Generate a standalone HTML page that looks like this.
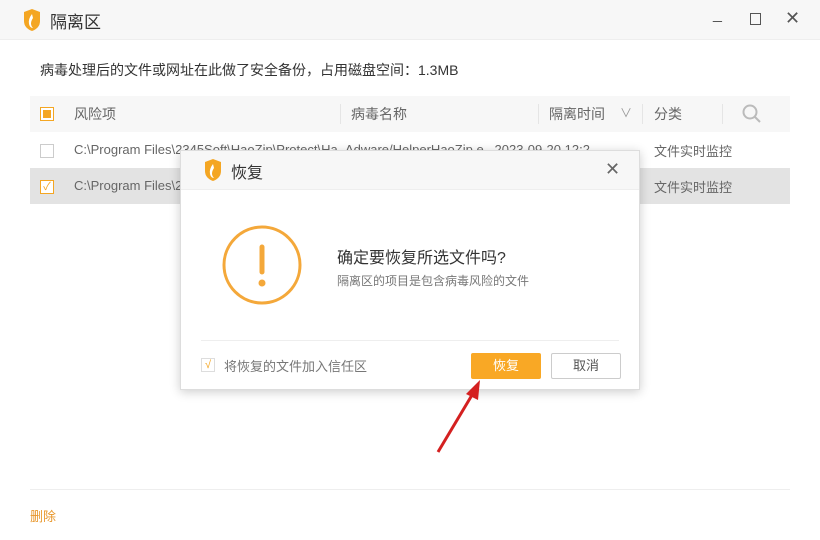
<!DOCTYPE html><html><head><meta charset="utf-8"><style>
*{margin:0;padding:0;box-sizing:border-box}
body{width:820px;height:540px;background:#fff;font-family:"Liberation Sans","Noto Sans CJK SC",sans-serif;position:relative;overflow:hidden;color:#333}
.a{position:absolute;white-space:nowrap}
.t{font-size:13px;color:#666}
.cb{position:absolute;width:14px;height:14px;border:1px solid #ccc;background:#fff}
</style></head><body>
<div class="a" style="left:0;top:0;width:820px;height:40px;background:#f7f7f7;border-bottom:1px solid #eee"></div>
<svg class="a" style="left:22px;top:9px" width="20" height="22" viewBox="0 0 20 22"><path d="M2 3 L10 0 L18 3 L18 12 Q18 19 10 22 Q2 19 2 12Z" fill="#f4a623"/><path d="M10 5 Q6 10 7 15 Q8 19 11 19 Q7 15 11 9 Z" fill="#fff"/></svg>
<div class="a" style="left:50px;top:8px;font-size:17px;color:#333">隔离区</div>
<div class="a" style="left:713px;top:6px;font-size:16px;color:#555">_</div>
<div class="a" style="left:750px;top:13px;width:11px;height:12px;border:1.5px solid #555"></div>
<div class="a" style="left:785px;top:8px;font-size:18px;color:#555">✕</div>
<div class="a" style="left:40px;top:60px;font-size:14px;color:#333">病毒处理后的文件或网址在此做了安全备份，占用磁盘空间：1.3MB</div>
<div class="a" style="left:30px;top:96px;width:760px;height:36px;background:#f7f7f7"></div>
<div class="cb" style="left:40px;top:107px;border-color:#f4a623"><div style="margin:2px;width:8px;height:8px;background:#f4a623"></div></div>
<div class="a t" style="left:74px;top:104px;font-size:14px">风险项</div>
<div class="a" style="left:340px;top:104px;width:1px;height:20px;background:#e5e5e5"></div>
<div class="a t" style="left:351px;top:104px;font-size:14px">病毒名称</div>
<div class="a" style="left:538px;top:104px;width:1px;height:20px;background:#e5e5e5"></div>
<div class="a t" style="left:549px;top:104px;font-size:14px">隔离时间</div>
<div class="a t" style="left:620px;top:104px;font-size:12px;color:#999">∨</div>
<div class="a" style="left:642px;top:104px;width:1px;height:20px;background:#e5e5e5"></div>
<div class="a t" style="left:654px;top:104px;font-size:14px">分类</div>
<div class="a" style="left:722px;top:104px;width:1px;height:20px;background:#e5e5e5"></div>
<svg class="a" style="left:742px;top:104px" width="20" height="20"><circle cx="8" cy="8" r="6.5" fill="none" stroke="#bbb" stroke-width="2"/><line x1="13" y1="13" x2="18" y2="18" stroke="#bbb" stroke-width="2"/></svg>
<div class="cb" style="left:40px;top:144px"></div>
<div class="a t" style="left:74px;top:142px">C:\Program Files\2345Soft\HaoZip\Protect\Ha&nbsp;&nbsp;Adware/HelperHaoZip.e&nbsp;&nbsp;&nbsp;2023-09-20 12:2</div>
<div class="a t" style="left:654px;top:141px">文件实时监控</div>
<div class="a" style="left:30px;top:168px;width:760px;height:36px;background:#e3e3e3"></div>
<div class="cb" style="left:40px;top:180px;border-color:#f4a623;color:#f4a623;font-size:11px;line-height:12px;text-align:center">✓</div>
<div class="a t" style="left:74px;top:178px">C:\Program Files\2</div>
<div class="a t" style="left:630px;top:178px">2</div>
<div class="a t" style="left:654px;top:177px">文件实时监控</div>
<div class="a" style="left:30px;top:489px;width:760px;height:1px;background:#eee"></div>
<div class="a" style="left:30px;top:506px;font-size:13px;color:#e8962a">删除</div>
<div class="a" style="left:180px;top:150px;width:460px;height:240px;background:#fff;border:1px solid #ddd;box-shadow:0 2px 10px rgba(0,0,0,.2)">
<div class="a" style="left:0;top:0;width:458px;height:39px;background:#f7f7f7;border-bottom:1px solid #eee"></div>
<svg class="a" style="left:22px;top:8px" width="20" height="22" viewBox="0 0 20 22"><path d="M2 3 L10 0 L18 3 L18 12 Q18 19 10 22 Q2 19 2 12Z" fill="#f4a623"/><path d="M10 5 Q6 10 7 15 Q8 19 11 19 Q7 15 11 9 Z" fill="#fff"/></svg>
<div class="a" style="left:50px;top:8px;font-size:16px;color:#333">恢复</div>
<div class="a" style="left:424px;top:8px;font-size:18px;color:#666">✕</div>
<svg class="a" style="left:41px;top:74px" width="80" height="80"><circle cx="40" cy="40" r="38" fill="none" stroke="#f4a83a" stroke-width="3"/><line x1="40" y1="22" x2="40" y2="47" stroke="#f4a83a" stroke-width="5" stroke-linecap="round"/><circle cx="40" cy="58" r="3.5" fill="#f4a83a"/></svg>
<div class="a" style="left:156px;top:93px;font-size:16px;color:#333">确定要恢复所选文件吗?</div>
<div class="a" style="left:156px;top:121px;font-size:12px;color:#777">隔离区的项目是包含病毒风险的文件</div>
<div class="a" style="left:20px;top:189px;width:418px;height:1px;background:#eee"></div>
<div class="a" style="left:20px;top:207px;width:14px;height:14px;border:1px solid #ddd;color:#f4a623;font-size:11px;line-height:12px;text-align:center">√</div>
<div class="a" style="left:43px;top:205px;font-size:13px;color:#777">将恢复的文件加入信任区</div>
<div class="a" style="left:290px;top:202px;width:70px;height:26px;background:#f9a825;color:#fff;font-size:13px;text-align:center;line-height:26px;border-radius:2px">恢复</div>
<div class="a" style="left:370px;top:202px;width:70px;height:26px;border:1px solid #ccc;color:#555;font-size:13px;text-align:center;line-height:24px;border-radius:2px">取消</div>
</div>
<svg class="a" style="left:430px;top:370px" width="60" height="90"><line x1="8" y1="82" x2="45" y2="20" stroke="#d42020" stroke-width="3"/><polygon points="50,10 36,24 48,30" fill="#d42020"/></svg>
</body></html>
